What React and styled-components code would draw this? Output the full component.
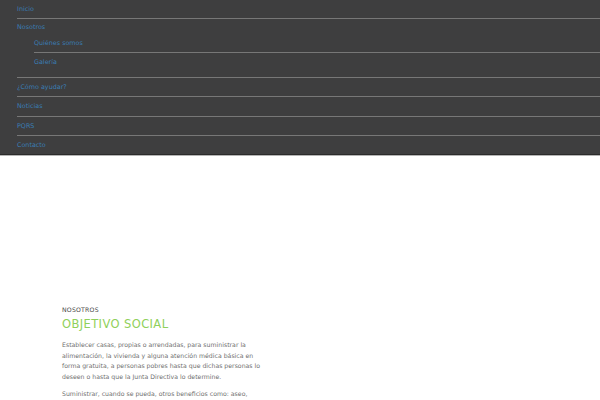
import styled, { createGlobalStyle } from "styled-components";

const GlobalStyle = createGlobalStyle`
  body {
    margin: 0;
    background: #ffffff;
    font-family: "DejaVu Sans", "Liberation Sans", sans-serif;
  }
`;

const menu = [
  { label: "Inicio" },
  { label: "Nosotros", children: ["Quiénes somos", "Galería"] },
  { label: "¿Cómo ayudar?" },
  { label: "Noticias" },
  { label: "PQRS" },
  { label: "Contacto" },
];

export default function App() {
  return (
    <>
      <GlobalStyle />
      <NavPanel>
        <Menu>
          {menu.map((item) => (
            <Item key={item.label}>
              <Link href="#" $compact={!!item.children}>
                {item.label}
              </Link>
              {item.children && (
                <SubMenu>
                  {item.children.map((child) => (
                    <SubItem key={child}>
                      <SubLink href="#">{child}</SubLink>
                    </SubItem>
                  ))}
                </SubMenu>
              )}
            </Item>
          ))}
        </Menu>
      </NavPanel>

      <Section>
        <Kicker>NOSOTROS</Kicker>
        <Title>OBJETIVO SOCIAL</Title>
        <Text>
          Establecer casas, propias o arrendadas, para suministrar la
          alimentación, la vivienda y alguna atención médica básica en forma
          gratuita, a personas pobres hasta que dichas personas lo deseen o
          hasta que la Junta Directiva lo determine.
        </Text>
        <Text>
          Suministrar, cuando se pueda, otros beneficios como: aseo,
          vestuario, recreación y acompañamiento.
        </Text>
      </Section>
    </>
  );
}

const NavPanel = styled.nav`
  background-color: #3e3e3f;
  border-bottom: 1px solid #2b2b2b;
  box-shadow: 0 1px 0 #b5b5b5;
`;

const Menu = styled.ul`
  list-style: none;
  margin: 0;
  padding: 0 0 0 17px;
`;

const Item = styled.li`
  border-bottom: 1px solid #777777;

  &:last-child {
    border-bottom: none;
  }

  &:last-child > a {
    line-height: 18px;
  }
`;

const Link = styled.a`
  display: block;
  color: #3a7db3;
  font-size: 6.4px;
  line-height: ${(p) => (p.$compact ? "17px" : "18.4px")};
  text-decoration: none;
`;

const SubMenu = styled.ul`
  list-style: none;
  margin: 0;
  padding: 0 0 5px 17px;
`;

const SubItem = styled.li`
  border-bottom: 1px solid #777777;

  &:last-child {
    border-bottom: none;
  }
`;

const SubLink = styled(Link)`
  line-height: 15.5px;

  ${SubItem}:last-child & {
    line-height: 19px;
  }
`;

const Section = styled.section`
  width: 202px;
  padding: 150px 0 0 62px;
`;

const Kicker = styled.div`
  color: #4a4a4a;
  font-size: 6.2px;
  line-height: 10px;
  letter-spacing: 0.2px;
`;

const Title = styled.h2`
  margin: 1px 0 8px;
  color: #8fd05a;
  font-size: 11.5px;
  font-weight: 400;
  line-height: 16px;
  letter-spacing: 0.4px;
`;

const Text = styled.p`
  margin: 0 0 6px;
  color: #6f6f6f;
  font-size: 6.2px;
  line-height: 10.6px;
`;
